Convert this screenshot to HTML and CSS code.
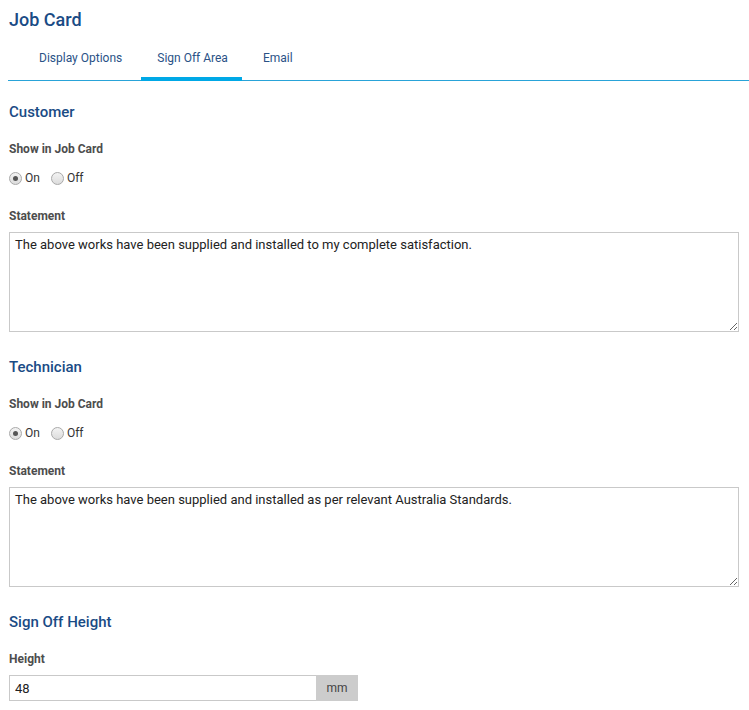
FILE: index.html
```html
<!DOCTYPE html>
<html>
<head>
<meta charset="utf-8">
<link rel="stylesheet" href="styles.css">
</head>
<body>
<div class="page">
  <h1 class="title">Job Card</h1>
  <div class="tabs">
    <div class="tab">Display Options</div>
    <div class="tab active">Sign Off Area</div>
    <div class="tab last">Email</div>
  </div>

  <h2 class="section">Customer</h2>
  <div class="label">Show in Job Card</div>
  <div class="radios">
    <label class="radio"><span class="dot checked"></span>On</label>
    <label class="radio"><span class="dot"></span>Off</label>
  </div>
  <div class="label stmt">Statement</div>
  <textarea class="area">The above works have been supplied and installed to my complete satisfaction.</textarea>

  <h2 class="section">Technician</h2>
  <div class="label">Show in Job Card</div>
  <div class="radios">
    <label class="radio"><span class="dot checked"></span>On</label>
    <label class="radio"><span class="dot"></span>Off</label>
  </div>
  <div class="label stmt">Statement</div>
  <textarea class="area">The above works have been supplied and installed as per relevant Australia Standards.</textarea>

  <h2 class="section">Sign Off Height</h2>
  <div class="label">Height</div>
  <div class="group">
    <input class="num" type="text" value="48">
    <span class="addon">mm</span>
  </div>
</div>
</body>
</html>
```
FILE: styles.css
```css
html, body { margin: 0; padding: 0; background: #fff; }
body { font-family: Roboto, "Liberation Sans", Arial, sans-serif; color: #333; }
.page { padding: 0 0 0 8px; }
.title {
  margin: 0;
  padding: 9px 0 0 1px;
  font-size: 18px;
  font-weight: 500;
  line-height: 22px;
  color: #1a4b85;
}
.tabs {
  display: flex;
  margin-top: 9px;
  padding-left: 14px;
  border-bottom: 1px solid #29a3d8;
  height: 41px;
  box-sizing: border-box;
}
.tab {
  padding: 11px 19px 0 17px;
  font-size: 12px;
  line-height: 15px;
  color: #2a5286;
  box-sizing: border-box;
  height: 40px;
}
.tab.active {
  border-bottom: 4px solid #00a8e6;
  height: 41px;
  margin-bottom: -1px;
  padding-left: 16px;
  padding-right: 14px;
}
.tab.last { padding-left: 21px; }
.section {
  margin: 22px 0 0 1px;
  font-size: 15px;
  font-weight: 500;
  line-height: 18px;
  color: #1a4b85;
}
.label {
  margin: 21px 0 0 1px;
  font-size: 12px;
  font-weight: 700;
  line-height: 15px;
  color: #4d4d4d;
}
.label.stmt { margin-top: 24px; }
.radios {
  display: flex;
  gap: 11px;
  margin: 14px 0 0 1px;
  height: 14px;
}
.radio {
  display: flex;
  align-items: center;
  font-size: 12px;
  color: #333;
  line-height: 14px;
}
.dot {
  width: 13px;
  height: 13px;
  border-radius: 50%;
  border: 1px solid #a9a9a9;
  background: linear-gradient(#f3f3f3, #dcdcdc);
  box-sizing: border-box;
  margin-right: 3px;
  position: relative;
}
.dot.checked::after {
  content: "";
  position: absolute;
  left: 3px; top: 3px;
  width: 5px; height: 5px;
  border-radius: 50%;
  background: #555;
}
.area {
  display: block;
  margin: 8px 0 0 1px;
  width: 730px;
  height: 100px;
  box-sizing: border-box;
  border: 1px solid #c9c9c9;
  padding: 4px 5px;
  font-family: Roboto, "Liberation Sans", Arial, sans-serif;
  font-size: 13px;
  line-height: 15px;
  color: #222;
  resize: vertical;
  outline: none;
}
.area + .section { margin-top: 26px; }
.group {
  display: flex;
  margin: 8px 0 0 1px;
  height: 26px;
}
.num {
  width: 307px;
  height: 26px;
  box-sizing: border-box;
  border: 1px solid #c9c9c9;
  border-right: none;
  padding: 0 5px;
  font-family: Roboto, "Liberation Sans", Arial, sans-serif;
  font-size: 13px;
  color: #222;
  outline: none;
}
.addon {
  width: 42px;
  background: #cccccc;
  font-size: 12px;
  color: #444;
  display: flex;
  align-items: center;
  justify-content: center;
}
```
